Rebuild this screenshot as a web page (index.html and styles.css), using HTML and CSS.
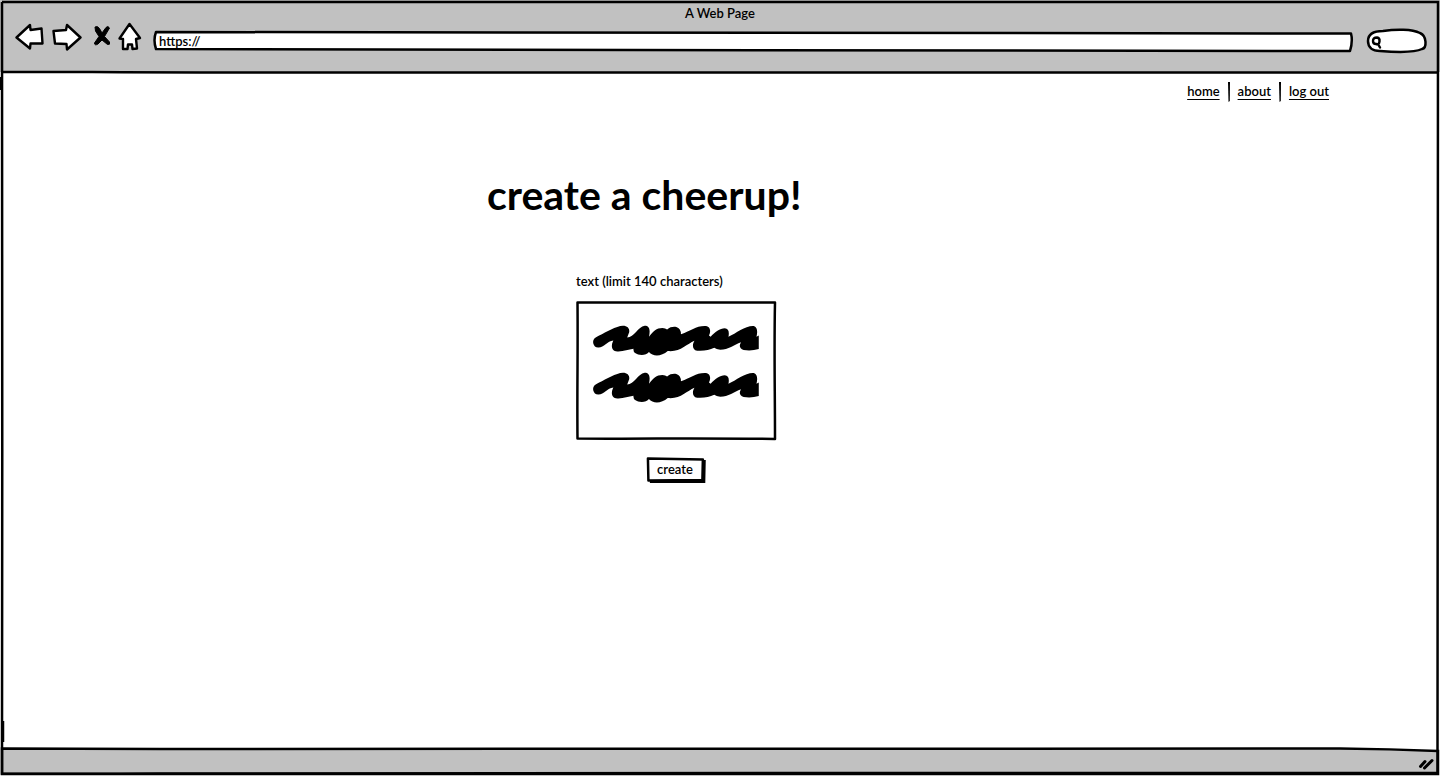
FILE: index.html
```html
<!DOCTYPE html>
<html lang="en">
<head>
<meta charset="utf-8">
<meta name="viewport" content="width=device-width, initial-scale=1">
<title>A Web Page</title>
<link rel="stylesheet" href="styles.css">
</head>
<body>
<div class="window">
  <header class="chrome">
    <div class="window-title">A Web Page</div>
    <div class="toolbar">
      <button class="tool back" type="button" aria-label="Back"><svg width="30" height="30" viewBox="0 0 30 30"><path d="M1.500 15.500 L15 3 L15.500 8 L26.500 6.500 L27.500 21.500 L15.500 21.500 L15 26.500 Z"/></svg></button>
      <button class="tool forward" type="button" aria-label="Forward"><svg width="30" height="30" viewBox="0 0 30 30"><path d="M1.500 9 L14 8 L15 3 L28.500 15.500 L15 27.500 L14.500 22 L3 21.500 Z"/></svg></button>
      <button class="tool stop" type="button" aria-label="Stop"><svg width="18" height="30" viewBox="0 0 18 30"><path class="solid" d="M2 5 Q4.500 3.500 6.500 6.500 L9 11 L13 5.500 Q15 3.500 16.500 6 L11.500 14.500 L16.500 20 Q17.500 23 14.500 22.500 L9 18 L5 22 Q1.500 24 1.500 21 L6 14.500 L2.500 9 Z"/></svg></button>
      <button class="tool home" type="button" aria-label="Home"><svg width="24" height="30" viewBox="0 0 24 30"><path d="M11.500 2 L22 16 L18 17 L19 26.500 L14.500 27 L14 22.500 L10 22.500 L9.500 27 L5 27 L5 17 L1.500 16.500 Z"/></svg></button>
      <div class="address">
        <svg class="sketch" viewBox="0 0 1200 22" preserveAspectRatio="none" aria-hidden="true"><path class="box" d="M3 2 C300 2 700 3 1198 3.500 Q1200 11 1197 21 C800 20.500 400 20 3 19 Q0 10 3 2 Z"/></svg>
        <input class="field" type="text" value="https://" aria-label="Address">
      </div>
      <div class="search">
        <svg class="sketch" viewBox="0 0 62 26" preserveAspectRatio="none" aria-hidden="true"><path class="box" d="M2 13 C2 5 9 3 17 3 C30 1 46 1 54 5 C61 8 61 20 56 21 C48 25 27 24 14 23 C6 23 2 19 2 13 Z"/><path class="lens" d="M7 13 Q7 9.500 11 9.500 Q14 10 13.500 13.500 Q13 17 10 16 Q7 16 7 13 M12 16 L14 19.500"/></svg>
        <input class="field" type="search" aria-label="Search">
      </div>
    </div>
    <svg class="rule" viewBox="0 0 1440 4" preserveAspectRatio="none" aria-hidden="true"><path d="M2 2 C60 1.500 100 2.500 200 2.500 C600 3 1000 2 1438 2.500"/></svg>
  </header>

  <main class="page">
    <nav class="nav">
      <a href="#">home</a>
      <svg class="divider" width="4" height="22" viewBox="0 0 4 22" aria-hidden="true"><path d="M1 1 H3 L2.800 20 L1.500 21 Z"/></svg>
      <a href="#">about</a>
      <svg class="divider" width="4" height="22" viewBox="0 0 4 22" aria-hidden="true"><path d="M1 1 H3 L2.800 20 L1.500 21 Z"/></svg>
      <a href="#">log out</a>
    </nav>
    <div class="content">
      <h1 class="heading">create a cheerup!</h1>
      <form class="form">
        <label class="label" for="message">text (limit 140 characters)</label>
        <div class="message">
          <svg class="sketch" viewBox="0 0 200 140" preserveAspectRatio="none" aria-hidden="true"><path class="box" d="M1.500 2.500 C60 2 120 3 199 2.500 C198 50 199 90 199 139 C130 138 60 139 1.500 138.500 C1 90 2 50 1.500 2.500 Z"/></svg>
          <textarea class="field" id="message" maxlength="140"></textarea>
          <div class="scribbles" aria-hidden="true">
            <svg viewBox="37 30 504 94"><path id="scribble" d="M38 85 C36 74 42 69 56 62 C78 51 107 33 128 32 C143 32 149 42 147 52 L141 68 C162 67 174 35 194 32 C208 32 212 43 207 66 C221 48 229 39 248 39 Q257 39 262 44 C271 36 279 35 290 36 Q304 40 304 58 C334 48 348 33 376 33 C391 33 397 45 389 62 L394 66 C407 51 422 40 437 40 Q453 41 448 66 C471 55 498 33 522 33 C534 33 538 47 533 66 L540 62 V103 Q517 110 494 106 Q476 99 486 82 C465 89 448 105 423 105 Q411 104 405 99 C390 105 374 110 353 108 C339 106 337 90 345 78 C321 88 302 113 264 109 C245 126 219 127 207 112 C199 123 176 123 165 115 Q159 111 160 102 C144 104 129 111 111 110 C93 109 91 93 99 77 C80 79 70 99 53 98 Q41 98 38 85 Z"/></svg>
            <svg viewBox="37 30 504 94"><use href="#scribble"/></svg>
          </div>
        </div>
        <button class="create" type="button">
          <svg class="sketch" viewBox="0 0 62 26" preserveAspectRatio="none" aria-hidden="true"><path class="solid" d="M57 3 H62 L61.500 26 H4 V22 H57 Z"/><path class="box" d="M2 1.500 L59 2.500 L58.500 23 L2.500 23.500 Z"/></svg>
          <span class="create-text">create</span>
        </button>
      </form>
    </div>
  </main>

  <footer class="status">
    <svg class="sketch" viewBox="0 0 1440 26" preserveAspectRatio="none" aria-hidden="true"><path class="bar" d="M2 0.500 C60 0.500 100 1 160 1 C600 0 1000 0.500 1340 0.500 Q1390 1 1438 3 V26 H2 Z"/></svg>
    <svg class="grip" width="18" height="14" viewBox="0 0 18 14" aria-hidden="true"><path d="M2.500 10.500 L7 5.500 M6.500 12 L14 4.500"/></svg>
  </footer>
  <svg class="sketch outline" viewBox="0 0 1440 776" preserveAspectRatio="none" aria-hidden="true"><path d="M2 2 H1438 L1437.500 773 C1100 773 500 773 160 773.500 C100 774 60 774 2 773.500 C3 500 1.500 300 2 2 M1 77 V90 M3 721 V742"/></svg>
</div>
</body>
</html>
```
FILE: styles.css
```css
* { box-sizing: border-box; }

body {
  margin: 0;
  background: #fff;
  color: #000;
  font: 600 13px/16px Lato, "Open Sans", sans-serif;
}

button, input, textarea {
  font: inherit;
  color: inherit;
}

.window {
  position: relative;
  display: flex;
  flex-direction: column;
  min-height: 100vh;
}

.sketch {
  position: absolute;
  inset: 0;
  width: 100%;
  height: 100%;
  overflow: visible;
  pointer-events: none;
}

.box {
  fill: #fff;
  stroke: #000;
  stroke-width: 2.5;
  stroke-linejoin: round;
  vector-effect: non-scaling-stroke;
}

.field {
  position: relative;
  display: block;
  width: 100%;
  height: 100%;
  margin: 0;
  padding: 0 6px 1px;
  border: 0;
  background: transparent;
  outline-offset: 2px;
  resize: none;
  appearance: none;
}

.chrome {
  position: relative;
  padding: 5px 12px 20px 15px;
  background: #c1c1c1;
}

.window-title {
  padding-right: 3px;
  text-align: center;
}

.toolbar {
  display: flex;
  align-items: center;
  height: 30px;
  margin-top: 1px;
}

.tool {
  display: flex;
  padding: 0;
  border: 0;
  background: none;
}

.tool path {
  fill: #fff;
  stroke: #000;
  stroke-width: 2.4;
  stroke-linejoin: round;
}

.tool .solid {
  fill: #000;
  stroke-width: 1;
}

.forward { margin-left: 7px; }
.stop { margin-left: 11px; }
.home { margin-left: 7px; }

.address {
  position: relative;
  flex: 1;
  height: 22px;
  margin: 8px 13px 0 11px;
}

.search {
  position: relative;
  width: 62px;
  height: 26px;
  margin-top: 8px;
}

.lens {
  fill: none;
  stroke: #000;
  stroke-width: 2.4;
  stroke-linecap: round;
}

.rule {
  position: absolute;
  left: 0;
  bottom: -2px;
  width: 100%;
  height: 4px;
}

.rule path, .outline path {
  fill: none;
  stroke: #000;
  stroke-width: 2.5;
  vector-effect: non-scaling-stroke;
}

.page {
  flex: 1;
  padding-top: 9px;
}

.nav {
  display: flex;
  justify-content: flex-end;
  align-items: center;
  gap: 7px;
  padding-right: 111px;
}

.nav a {
  padding-bottom: 2px;
  color: inherit;
  text-decoration-thickness: 1px;
  text-underline-offset: 3px;
}

.content { padding: 68px 0 32px calc(50% - 233px); }

.heading {
  margin: 0;
  font-size: 41px;
  line-height: 48px;
  font-weight: 700;
}

.form {
  display: flex;
  flex-direction: column;
  width: 200px;
  margin: 54px 0 0 89px;
}

.message {
  position: relative;
  height: 140px;
  margin-top: 11px;
}

.message .field { padding: 16px; }

.scribbles {
  position: absolute;
  inset: 25px 16px auto;
  display: grid;
  gap: 16px;
  pointer-events: none;
}

.scribbles svg {
  display: block;
  width: 100%;
  height: 31px;
}

.create {
  position: relative;
  align-self: center;
  height: 26px;
  margin-top: 17px;
  padding: 0 13px 2px 11px;
  border: 0;
  background: none;
}

.create-text { position: relative; }

.status {
  position: relative;
  display: flex;
  align-items: center;
  justify-content: flex-end;
  height: 28px;
  padding: 3px 4px 0 0;
  border-bottom: 2px solid #fff;
}

.bar {
  fill: #c1c1c1;
  stroke: #000;
  stroke-width: 2.5;
  vector-effect: non-scaling-stroke;
}

.grip { position: relative; }

.grip path {
  stroke: #000;
  stroke-width: 3;
  stroke-linecap: round;
}
```
